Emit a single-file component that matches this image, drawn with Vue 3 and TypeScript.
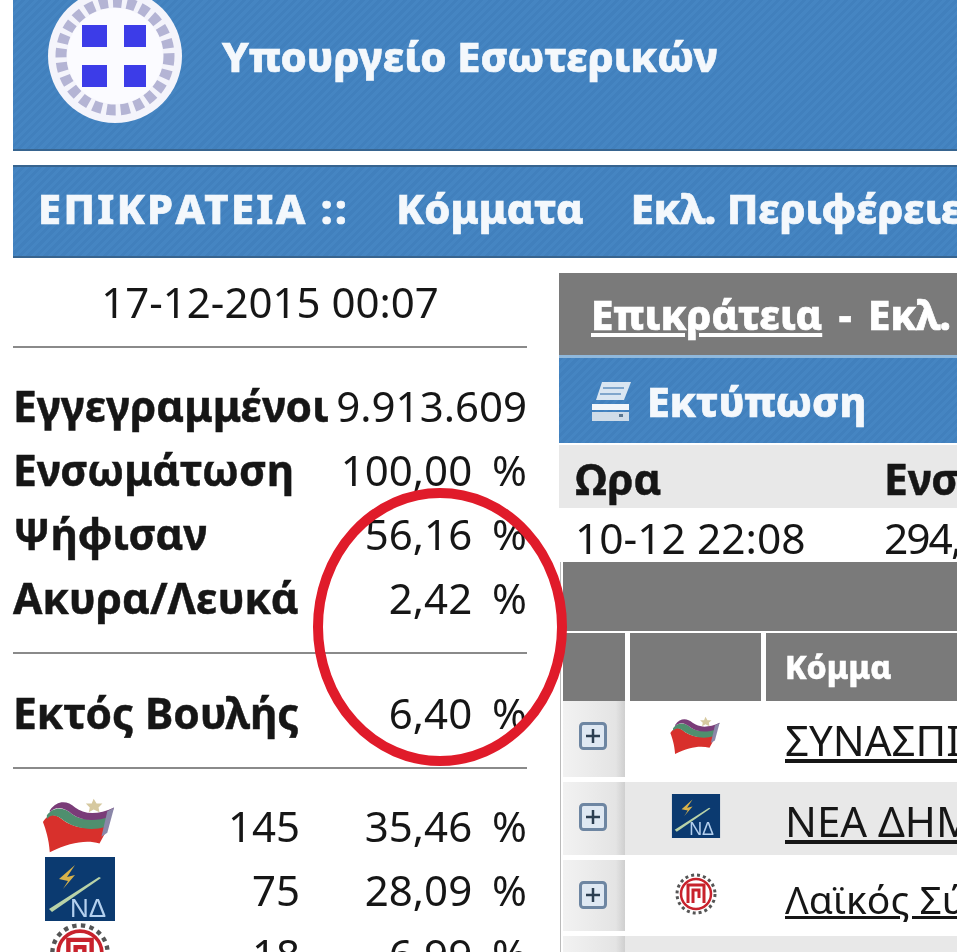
<script setup lang="ts">
interface Stat {
  label: string
  value: string
}

interface Party {
  logo: string
  name: string
  seats: number
  share: string
}

const stats: Stat[] = [
  { label: 'Εγγεγραμμένοι', value: '9.913.609' },
  { label: 'Ενσωμάτωση', value: '100,00 %' },
  { label: 'Ψήφισαν', value: '56,16 %' },
  { label: 'Ακυρα/Λευκά', value: '2,42 %' },
]

const parties: Party[] = [
  { logo: '#logo-syriza', name: 'ΣΥΝΑΣΠΙΣΜΟΣ', seats: 145, share: '35,46 %' },
  { logo: '#logo-nd', name: 'ΝΕΑ ΔΗΜΟΚΡΑΤΙΑ', seats: 75, share: '28,09 %' },
  { logo: '#logo-ls', name: 'Λαϊκός Σύνδεσμος', seats: 18, share: '6,99 %' },
]
</script>

<template>
  <div class="page">
    <svg class="defs" aria-hidden="true">
      <symbol id="logo-syriza" viewBox="0 0 80 56">
        <path d="M2 25C9 14 16 17 24 24C36 32 52 33 64 28L68 32L60 47C46 43 30 46 9 56C8 42 5 33 2 25Z" fill="#d8302c" />
        <path d="M6 18C14 8 24 10 32 17C42 24 56 24 70 16L66 30C52 34 36 32 24 24C17 18 11 16 6 22Z" fill="#4f8f6e" />
        <path d="M9 13C17 2 27 3 35 10C44 17 58 18 75 10L71 19C56 25 42 24 32 17C24 10 16 8 9 15Z" fill="#7a3c78" />
        <path d="M68 14L75 10L68 36L62 40Z" fill="#8a87a8" />
        <path d="M54 1L57 6L63 6L59 10L60 15L54 12L49 15L50 10L46 6L52 6Z" fill="#d6c9a0" />
      </symbol>
      <symbol id="logo-nd" viewBox="0 0 70 64">
        <rect width="70" height="64" fill="#0b3a70" />
        <path d="M14 22L30 8L22 20L30 18L18 32L23 24Z" fill="#d8b24a" />
        <path d="M4 52L54 20L56 21L7 55Z" fill="#b9d3a8" />
        <text x="25" y="60" class="nd-text">ΝΔ</text>
      </symbol>
      <symbol id="logo-ls" viewBox="0 0 44 44">
        <circle cx="22" cy="22" r="19" fill="none" stroke="#555" stroke-width="3" stroke-dasharray="3 3" />
        <circle cx="22" cy="22" r="15" fill="#fff" stroke="#c8222c" stroke-width="2.5" />
        <path d="M14 31V13H30V31M19 31V18H25V26" fill="none" stroke="#c8222c" stroke-width="3" />
      </symbol>
    </svg>

    <header class="banner">
      <svg class="emblem" viewBox="0 0 136 136" aria-hidden="true">
        <circle cx="68" cy="68" r="67" fill="#f4f4fb" />
        <circle cx="68" cy="68" r="54" fill="none" stroke="#b4b4d4" stroke-width="11" stroke-dasharray="9 5" />
        <circle cx="68" cy="68" r="48" fill="#fbfbff" />
        <path d="M35 37H60V59H35ZM77 37H99V59H77ZM35 77H60V99H35ZM77 77H99V99H77Z" fill="#3c3ce8" />
      </svg>
      <span class="banner-title">Υπουργείο Εσωτερικών</span>
    </header>

    <nav class="nav">
      <span class="nav-current">ΕΠΙΚΡΑΤΕΙΑ ::</span>
      <span class="nav-item">Κόμματα</span>
      <span class="nav-item">Εκλ. Περιφέρειες</span>
    </nav>

    <div class="columns">
      <aside class="side">
        <div class="date">17-12-2015 00:07</div>
        <div class="stats">
          <div v-for="s in stats" :key="s.label" class="stat">
            <b>{{ s.label }}</b>
            <span>{{ s.value }}</span>
          </div>
        </div>
        <div class="outside">
          <div class="stat">
            <b>Εκτός Βουλής</b>
            <span>6,40 %</span>
          </div>
        </div>
        <div class="seats">
          <div v-for="p in parties" :key="p.name" class="seat-row">
            <svg class="seat-logo"><use :href="p.logo" /></svg>
            <span>{{ p.seats }}</span>
            <span>{{ p.share }}</span>
          </div>
        </div>
      </aside>

      <main class="main">
        <div class="crumbs"><u>Επικράτεια</u> - Εκλ. Περιφέρειες</div>
        <div class="print">
          <svg class="printer" viewBox="0 0 42 42" aria-hidden="true">
            <path d="M11 2H40L33 20H5Z" fill="#d9e6f2" />
            <path d="M12 8H33M9 14H30" stroke="#7fa6cc" stroke-width="2" />
            <path d="M1 24H38V30H1Z" fill="#f2f6fa" />
            <path d="M1 32H38V41H1Z" fill="#cfdce8" />
            <rect x="28" y="34" width="4" height="3" fill="#5a7690" />
          </svg>
          <span>Εκτύπωση</span>
        </div>
        <div class="times times-head">
          <b>Ωρα</b>
          <b>Ενσωμάτωση</b>
        </div>
        <div class="times">
          <span>10-12 22:08</span>
          <span class="votes">294,</span>
        </div>

        <div class="results">
          <div class="results-band"></div>
          <div class="results-row results-head">
            <div></div>
            <div></div>
            <div class="party-head">Κόμμα</div>
          </div>
          <div v-for="p in parties" :key="p.name" class="results-row party">
            <div class="expand">
              <svg class="plus" viewBox="0 0 28 28" aria-hidden="true">
                <rect x="1.5" y="1.5" width="25" height="25" rx="3" fill="#dfe8f2" stroke="#6e86a2" stroke-width="3" />
                <path d="M14 7V21M7 14H21" stroke="#2c3e50" stroke-width="2.5" />
              </svg>
            </div>
            <div class="party-logo">
              <svg class="table-logo"><use :href="p.logo" /></svg>
            </div>
            <div class="party-name"><u>{{ p.name }}</u></div>
          </div>
          <div class="results-row party party-next">
            <div class="expand"></div>
            <div></div>
            <div></div>
          </div>
        </div>
      </main>
    </div>

    <svg class="ring" viewBox="0 0 256 282" aria-hidden="true">
      <ellipse cx="128" cy="141" rx="122" ry="134" fill="none" stroke="#e01b2a" stroke-width="10" />
    </svg>
  </div>
</template>

<style>
html,
body {
  margin: 0;
  background: #fff;
}
</style>

<style scoped>
.page {
  position: relative;
  width: 960px;
  height: 952px;
  overflow: hidden;
  padding-left: 13px;
  box-sizing: border-box;
  background: #fff;
  color: #161616;
  font-family: "Noto Sans", "Open Sans", sans-serif;
  font-size: 42px;
  word-spacing: 9px;
  filter: blur(0.5px);
}

.defs {
  position: absolute;
  width: 0;
  height: 0;
}

.nd-text {
  font-family: "Liberation Sans", sans-serif;
  font-size: 26px;
  fill: #b4d0ee;
}

.banner,
.nav,
.print {
  background: repeating-linear-gradient(135deg, #4180bd 0 3px, #4585c2 3px 6px);
  color: #f4f8fc;
  font-weight: 800;
  word-spacing: normal;
  -webkit-text-stroke: 0.7px currentColor;
}

.banner {
  display: flex;
  align-items: center;
  box-sizing: border-box;
  width: 944px;
  height: 151px;
  padding-left: 34px;
  overflow: hidden;
  border-bottom: 2px solid #37648f;
}

.emblem {
  flex: none;
  width: 136px;
  height: 136px;
  margin-top: -38px;
}

.banner-title {
  margin-left: 39px;
  margin-top: -38px;
  font-size: 41.7px;
  white-space: nowrap;
}

.nav {
  display: flex;
  align-items: center;
  box-sizing: border-box;
  width: 944px;
  height: 93px;
  margin-top: 14px;
  padding-left: 25px;
  padding-bottom: 7px;
  border-top: 2px solid #37648f;
  border-bottom: 2px solid #37648f;
  overflow: hidden;
  white-space: nowrap;
  font-size: 41.5px;
}

.nav-current {
  letter-spacing: 2.4px;
}

.nav-item {
  margin-left: 47px;
}

.columns {
  display: flex;
  gap: 32px;
  margin-top: 0;
}

.side {
  flex: none;
  width: 514px;
}

.date {
  box-sizing: border-box;
  height: 90px;
  padding-top: 15px;
  border-bottom: 2px solid #8a8a8a;
  text-align: center;
  word-spacing: normal;
  line-height: 58px;
}

.stats {
  box-sizing: border-box;
  padding: 26px 0 22px;
  border-bottom: 2px solid #8a8a8a;
}

.outside {
  box-sizing: border-box;
  padding: 27px 0 22px;
  border-bottom: 2px solid #8a8a8a;
}

.stat {
  display: flex;
  justify-content: space-between;
  height: 64px;
  line-height: 64px;
  white-space: nowrap;
}

.stat b {
  font-size: 42.5px;
  word-spacing: normal;
  -webkit-text-stroke: 0.5px currentColor;
}

.seats {
  padding-top: 24px;
}

.seat-row {
  display: grid;
  grid-template-columns: 134px 153px 1fr;
  align-items: center;
  height: 64px;
  text-align: right;
}

.seat-logo {
  justify-self: center;
  width: 78px;
  height: 64px;
}

.main {
  flex: none;
  width: 398px;
  margin-top: 15px;
}

.crumbs {
  box-sizing: border-box;
  height: 82px;
  padding-left: 32px;
  background: #7a7a7a;
  color: #fff;
  font-size: 40.3px;
  font-weight: 800;
  word-spacing: 6px;
  line-height: 84px;
  white-space: nowrap;
  overflow: hidden;
  -webkit-text-stroke: 0.7px currentColor;
}

.print {
  display: flex;
  align-items: center;
  gap: 14px;
  box-sizing: border-box;
  height: 88px;
  padding-left: 32px;
  border-top: 3px solid #8fb8dc;
  font-size: 41px;
}

.printer {
  width: 42px;
  height: 42px;
}

.times {
  display: grid;
  grid-template-columns: 309px 1fr;
  height: 52px;
  padding-left: 16px;
  overflow: hidden;
  white-space: nowrap;
  word-spacing: normal;
  line-height: 60px;
  font-size: 42.5px;
}

.times-head {
  height: 63px;
  margin-top: 2px;
  background: #e8e8e8;
  line-height: 68px;
  -webkit-text-stroke: 0.5px currentColor;
}

.votes {
  letter-spacing: -2px;
}

.results {
  margin-top: 2px;
  padding-left: 2px;
  border-left: 1px solid #bbb;
  margin-left: 1px;
}

.results-band {
  height: 69px;
  margin-bottom: 2px;
  background: #7a7a7a;
}

.results-row {
  display: grid;
  grid-template-columns: 62px 131px 1fr;
  column-gap: 5px;
}

.results-head {
  height: 67px;
  margin-bottom: 1px;
}

.results-head > div {
  background: #7a7a7a;
}

.party-head {
  padding-left: 19px;
  color: #fff;
  font-size: 32px;
  font-weight: 800;
  line-height: 68px;
  -webkit-text-stroke: 0.5px currentColor;
}

.party {
  height: 76px;
  margin-bottom: 5px;
}

.party:nth-child(4) {
  height: 73px;
  background: #e8e8e8;
}

.party:nth-child(5) {
  height: 71px;
}

.party:nth-child(5) .party-name {
  font-size: 39px;
}

.party-next {
  height: 30px;
  background: #e8e8e8;
}

.expand {
  background: linear-gradient(90deg, #f2f2f2, #e4e4e4 85%, #cfcfcf);
}

.plus {
  display: block;
  width: 28px;
  height: 28px;
  margin: 21px 0 0 16px;
}

.party-logo {
  display: flex;
  justify-content: center;
  padding-top: 12px;
}

.table-logo {
  width: 54px;
  height: 44px;
}

.party-name {
  padding-left: 19px;
  overflow: hidden;
  white-space: nowrap;
  word-spacing: normal;
  line-height: 78px;
}

.ring {
  position: absolute;
  left: 312px;
  top: 486px;
  width: 256px;
  height: 282px;
}
</style>
